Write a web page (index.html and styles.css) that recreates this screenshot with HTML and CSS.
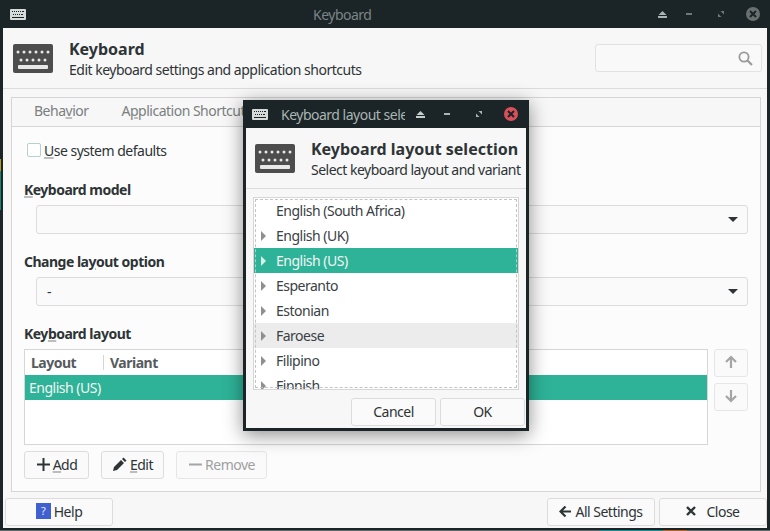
FILE: index.html
```html
<!DOCTYPE html>
<html lang="en">
<head>
  <meta charset="UTF-8">
  <title>Keyboard</title>
  <link rel="stylesheet" href="styles.css">
</head>
<body>
  <div class="window">
    <div class="titlebar">
      <svg class="tb-icon" width="16" height="11" viewBox="0 0 16 11"><use href="#kbd"/></svg>
      <span class="tb-title">Keyboard</span>
      <div class="tb-buttons">
        <svg class="tb-shade" width="9" height="7" viewBox="0 0 9 7"><path d="M4.5 0L8.5 4H.5zM0 5h9v2H0z" fill="#a9b5b3"/></svg>
        <svg class="tb-min" width="6" height="2" viewBox="0 0 6 2"><path d="M0 0h6v2H0z" fill="#6f7879"/></svg>
        <svg class="tb-max" width="6" height="6" viewBox="0 0 6 6"><path d="M2.5 0H6v3.5zM0 2.5L3.5 6H0z" fill="#6f7879"/></svg>
        <span class="tb-close"><svg width="8" height="8" viewBox="0 0 8 8"><path d="M1 1l6 6M7 1L1 7" stroke="#1b2426" stroke-width="2"/></svg></span>
      </div>
    </div>

    <div class="content">
      <div class="header">
        <svg class="head-icon" width="40" height="29" viewBox="0 0 40 29"><use href="#kbd-large"/></svg>
        <div class="head-text">
          <div class="head-title">Keyboard</div>
          <div class="head-sub">Edit keyboard settings and application shortcuts</div>
        </div>
        <div class="search">
          <svg width="15" height="15" viewBox="0 0 15 15"><circle cx="6" cy="6" r="4.6" fill="none" stroke="#9a9a9a" stroke-width="1.8"/><path d="M9.5 9.5L14 14" stroke="#9a9a9a" stroke-width="2.2"/></svg>
        </div>
      </div>

      <div class="notebook">
        <div class="tabs">
          <span class="tab">Beha<u>v</u>ior</span>
          <span class="tab">A<u>p</u>plication Shortcuts</span>
        </div>
        <div class="panel">
          <label class="check"><span class="check-box"></span><span><u>U</u>se system defaults</span></label>

          <div class="field-label"><u>K</u>eyboard model</div>
          <div class="combo"><span></span><i class="caret"></i></div>

          <div class="field-label">Change la<u>y</u>out option</div>
          <div class="combo"><span>-</span><i class="caret"></i></div>

          <div class="field-label">Key<u>b</u>oard layout</div>
          <div class="layout-row">
            <div class="list">
              <div class="list-head"><span class="col-layout">Layout</span><span class="col-variant">Variant</span></div>
              <div class="list-sel">English (US)</div>
            </div>
            <div class="move-btns">
              <button class="btn btn-off btn-move"><svg width="14" height="14" viewBox="0 0 14 14"><path d="M7 13V2M2 7l5-5 5 5" fill="none" stroke="#a5a5a5" stroke-width="2.2"/></svg></button>
              <button class="btn btn-off btn-move"><svg width="14" height="14" viewBox="0 0 14 14"><path d="M7 1v11M2 7l5 5 5-5" fill="none" stroke="#a5a5a5" stroke-width="2.2"/></svg></button>
            </div>
          </div>
          <div class="actions">
            <button class="btn btn-add"><svg width="15" height="15" viewBox="0 0 15 15"><path d="M7.5 1v13M1 7.5h13" stroke="#2e3436" stroke-width="2"/></svg><span><u>A</u>dd</span></button>
            <button class="btn btn-edit"><svg width="15" height="15" viewBox="0 0 15 15"><path d="M1 14l1-4 7-7 3 3-7 7zM10 2l1.500-1.500 3 3L13 5z" fill="#2e3436"/></svg><span><u>E</u>dit</span></button>
            <button class="btn btn-off btn-remove"><svg width="15" height="15" viewBox="0 0 15 15"><path d="M1 7.5h13" stroke="#a5a5a5" stroke-width="2"/></svg><span>Remove</span></button>
          </div>
        </div>
      </div>

      <div class="footer">
        <button class="btn btn-foot"><span class="help-icon">?</span><span>Help</span></button>
        <div class="foot-right">
          <button class="btn btn-foot"><svg width="13" height="13" viewBox="0 0 13 13"><path d="M12 6.5H2M6.5 1.500l-5 5 5 5" fill="none" stroke="#2e3436" stroke-width="2.2"/></svg><span>All Settings</span></button>
          <button class="btn btn-foot"><svg width="10" height="10" viewBox="0 0 10 10"><path d="M1 1l8 8M9 1l-8 8" stroke="#2e3436" stroke-width="2.4"/></svg><span class="close-label">Close</span></button>
        </div>
      </div>
    </div>
    <div class="desktop-strip"><span class="strip-teal"></span><span class="strip-orange"></span></div>
  </div>
  <div class="edge-yellow"></div>
  <div class="edge-teal"></div>

  <div class="dialog">
    <div class="titlebar dlg-bar">
      <svg class="dlg-tb-icon" width="16" height="11" viewBox="0 0 16 11"><use href="#kbd"/></svg>
      <span class="dlg-tb-title">Keyboard layout selection</span>
      <div class="tb-buttons dlg-buttons">
        <svg class="tb-shade" width="9" height="7" viewBox="0 0 9 7"><path d="M4.5 0L8.5 4H.5zM0 5h9v2H0z" fill="#c3d0ce"/></svg>
        <svg class="tb-min" width="6" height="2" viewBox="0 0 6 2"><path d="M0 0h6v2H0z" fill="#a9b5b3"/></svg>
        <svg class="tb-max" width="6" height="6" viewBox="0 0 6 6"><path d="M2.5 0H6v3.5zM0 2.5L3.5 6H0z" fill="#a9b5b3"/></svg>
        <span class="tb-close tb-close-on"><svg width="8" height="8" viewBox="0 0 8 8"><path d="M1 1l6 6M7 1L1 7" stroke="#1b2426" stroke-width="2"/></svg></span>
      </div>
    </div>
    <div class="dlg-body">
      <div class="dlg-header">
        <svg class="head-icon" width="40" height="29" viewBox="0 0 40 29"><use href="#kbd-large"/></svg>
        <div class="dlg-text">
          <div class="head-title">Keyboard layout selection</div>
          <div class="head-sub">Select keyboard layout and variant</div>
        </div>
      </div>
      <div class="tree">
        <div class="tree-focus"></div>
        <div class="tree-row"><span class="arrow arrow-none"></span>English (South Africa)</div>
        <div class="tree-row"><span class="arrow"></span>English (UK)</div>
        <div class="tree-row tree-sel"><span class="arrow"></span>English (US)</div>
        <div class="tree-row"><span class="arrow"></span>Esperanto</div>
        <div class="tree-row"><span class="arrow"></span>Estonian</div>
        <div class="tree-row tree-hover"><span class="arrow"></span>Faroese</div>
        <div class="tree-row"><span class="arrow"></span>Filipino</div>
        <div class="tree-row"><span class="arrow"></span>Finnish</div>
      </div>
      <div class="dlg-actions">
        <button class="btn btn-dlg">Cancel</button>
        <button class="btn btn-dlg">OK</button>
      </div>
    </div>
  </div>

  <svg class="defs" width="0" height="0">
    <defs>
      <g id="kbd" fill="#d6dad9">
        <path fill-rule="evenodd" d="M1 0h14a1 1 0 0 1 1 1v9a1 1 0 0 1-1 1H1a1 1 0 0 1-1-1V1a1 1 0 0 1 1-1zM2 2v1h1V2zm2 0v1h1V2zm2 0v1h1V2zm2 0v1h1V2zm2 0v1h1V2zm2 0v1h2V2zM3 5v1h1V5zm2 0v1h1V5zm2 0v1h1V5zm2 0v1h1V5zm2 0v1h2V5zM2 8v1h12V8z"/>
      </g>
      <g id="kbd-large">
        <rect width="40" height="29" rx="2" fill="#4d4d4d"/>
        <g fill="#e8e8e8">
          <circle cx="5" cy="8" r="1.500"/><circle cx="11" cy="8" r="1.500"/><circle cx="17" cy="8" r="1.500"/><circle cx="23" cy="8" r="1.500"/><circle cx="29" cy="8" r="1.500"/><circle cx="35" cy="8" r="1.500"/>
          <circle cx="8" cy="16" r="1.500"/><circle cx="14" cy="16" r="1.500"/><circle cx="20" cy="16" r="1.500"/><circle cx="26" cy="16" r="1.500"/><circle cx="32" cy="16" r="1.500"/>
          <rect x="5" y="21" width="30" height="4" rx="1"/>
        </g>
      </g>
    </defs>
  </svg>
</body>
</html>
```

FILE: styles.css
```css
html, body {
  margin: 0;
  padding: 0;
}
body {
  width: 770px;
  height: 531px;
  overflow: hidden;
  position: relative;
  font-family: "Noto Sans", sans-serif;
  font-size: 14px;
  letter-spacing: -0.5px;
  color: #2e3436;
  background: #1b2426;
}
u {
  text-decoration-color: #bdbdbd;
  text-decoration-thickness: 2px;
  text-underline-offset: 1px;
}
.defs {
  position: absolute;
}
.window {
  width: 770px;
  height: 531px;
  box-sizing: border-box;
  padding: 0 3px;
  display: flex;
  flex-direction: column;
}
.titlebar {
  height: 28px;
  flex: none;
  display: flex;
  align-items: center;
  position: relative;
  color: #7b8486;
}
.tb-icon {
  margin-left: 7px;
  margin-top: 1px;
}
.tb-title {
  position: absolute;
  left: 310px;
  top: 5px;
}
.tb-buttons {
  margin-left: auto;
  margin-right: 7px;
  display: flex;
  align-items: center;
}
.tb-min {
  margin-left: 19px;
}
.tb-max {
  margin-left: 26px;
}
.tb-close {
  margin-left: 22px;
  width: 14px;
  height: 14px;
  border-radius: 50%;
  background: #6a7070;
  display: flex;
  align-items: center;
  justify-content: center;
}
.tb-close-on {
  background: #d9505a;
}
.content {
  flex: none;
  height: 500px;
  background: #f7f7f7;
  display: flex;
  flex-direction: column;
}
.desktop-strip {
  margin: 2px -3px 0;
  height: 1px;
  background: #5b6769;
  position: relative;
  display: flex;
  padding-left: 600px;
}
.strip-teal {
  width: 63px;
  background: #0f8c93;
}
.strip-orange {
  width: 24px;
  background: #c2611c;
}
.edge-yellow {
  position: absolute;
  left: 0;
  top: 159px;
  width: 1px;
  height: 12px;
  background: #b59a1d;
}
.edge-teal {
  position: absolute;
  left: 0;
  top: 171px;
  width: 1px;
  height: 39px;
  background: #12876e;
}
.header {
  height: 61px;
  flex: none;
  box-sizing: border-box;
  border-bottom: 1px solid #dcdcdc;
  display: flex;
  align-items: flex-start;
  padding: 11px 5px 0 10px;
}
.head-icon {
  flex: none;
  margin-top: 5px;
}
.head-text {
  margin-left: 16px;
}
.head-title {
  font-size: 16px;
  font-weight: 700;
  letter-spacing: 0;
  line-height: 20px;
}
.head-sub {
  line-height: 21px;
}
.search {
  margin-left: auto;
  margin-top: 5px;
  width: 167px;
  height: 28px;
  box-sizing: border-box;
  border: 1px solid #e2e2e2;
  border-radius: 3px;
  background: #f9f9f9;
  display: flex;
  align-items: center;
  justify-content: flex-end;
  padding-right: 8px;
}
.notebook {
  margin: 8px 6px 0 8px;
  height: 395px;
  flex: none;
  box-sizing: border-box;
  border: 1px solid #d6d6d6;
  display: flex;
  flex-direction: column;
}
.tabs {
  height: 29px;
  flex: none;
  box-sizing: border-box;
  border-bottom: 1px solid #d6d6d6;
  display: flex;
  align-items: center;
  padding: 0 0 4px 22px;
  gap: 33px;
  color: #7a7f80;
  white-space: nowrap;
}
.panel {
  flex: 1;
  background: #fcfcfc;
  padding: 13px 12px 0;
}
.check {
  display: flex;
  align-items: center;
  height: 20px;
  margin-left: 3px;
  gap: 3px;
}
.check-box {
  width: 12px;
  height: 12px;
  border: 1px solid #b6d0cf;
  border-radius: 2px;
  background: #fff;
}
.field-label {
  font-weight: 700;
  line-height: 20px;
  margin-top: 20px;
}
.field-label + .combo {
  margin-top: 5px;
}
.combo + .field-label {
  margin-top: 18px;
}
.combo {
  margin-left: 12px;
  height: 29px;
  box-sizing: border-box;
  border: 1px solid #dcdcdc;
  border-radius: 3px;
  background: #fafafa;
  display: flex;
  align-items: center;
  justify-content: space-between;
  padding: 0 9px 0 10px;
}
.caret {
  width: 0;
  height: 0;
  border-left: 5px solid transparent;
  border-right: 5px solid transparent;
  border-top: 5px solid #2e3436;
}
.layout-row {
  display: flex;
  gap: 6px;
  margin-top: 5px;
}
.list {
  width: 684px;
  height: 96px;
  box-sizing: border-box;
  border: 1px solid #d6d6d6;
  background: #fff;
}
.list-head {
  height: 25px;
  display: flex;
  align-items: center;
  font-weight: 700;
  color: #555b5e;
}
.col-layout {
  width: 79px;
  box-sizing: border-box;
  padding-left: 6px;
  border-right: 1px solid #d6d6d6;
  line-height: 15px;
  margin-right: 6px;
}
.list-sel {
  height: 25px;
  line-height: 25px;
  background: #2eb398;
  color: #f4f4f4;
  padding-left: 4px;
}
.move-btns {
  display: flex;
  flex-direction: column;
  gap: 6px;
}
.btn {
  font: inherit;
  letter-spacing: inherit;
  color: inherit;
  height: 28px;
  box-sizing: border-box;
  border: 1px solid #dcdcdc;
  border-radius: 3px;
  background: #fafafa;
  padding: 0 0 2px;
  display: flex;
  align-items: center;
  justify-content: center;
}
.btn-off {
  color: #a0a0a0;
  border-color: #e6e6e6;
}
.btn-move {
  width: 34px;
}
.actions {
  display: flex;
  margin-top: 6px;
  gap: 12px;
}
.btn-add {
  width: 65px;
  gap: 2px;
}
.btn-edit {
  width: 63px;
  gap: 3px;
}
.btn-remove {
  width: 91px;
  gap: 2px;
}
.footer {
  display: flex;
  justify-content: space-between;
  margin: 6px 0 0 2px;
}
.foot-right {
  display: flex;
  gap: 4px;
}
.btn-foot {
  width: 108px;
  gap: 3px;
}
.help-icon {
  width: 15px;
  height: 16px;
  background: #4060d0;
  color: #e8ecf8;
  font-size: 11px;
  line-height: 16px;
  text-align: center;
}
.close-label {
  margin-left: 7px;
}

/* dialog floats over the main window */
.dialog {
  position: absolute;
  left: 243px;
  top: 100px;
  width: 286px;
  height: 331px;
  box-sizing: border-box;
  padding: 0 3px 3px;
  background: #1b2426;
  display: flex;
  flex-direction: column;
  box-shadow: 0 4px 18px rgba(0, 0, 0, 0.45);
}
.dlg-bar {
  color: #a9b5b3;
}
.dlg-tb-icon {
  margin-left: 6px;
}
.dlg-tb-title {
  width: 124px;
  margin-left: 13px;
  overflow: hidden;
  white-space: nowrap;
}
.dlg-buttons {
  margin-right: 8px;
}
.dlg-body {
  flex: 1;
  background: #f7f7f7;
  display: flex;
  flex-direction: column;
}
.dlg-header {
  height: 61px;
  flex: none;
  box-sizing: border-box;
  border-bottom: 1px solid #dcdcdc;
  display: flex;
  padding: 11px 0 0 9px;
}
.dlg-text {
  margin-left: 16px;
  white-space: nowrap;
}
.tree {
  position: relative;
  margin: 8px 7px 0;
  height: 193px;
  box-sizing: border-box;
  border: 1px solid #d6d6d6;
  background: #fff;
  overflow: hidden;
}
.tree-focus {
  position: absolute;
  inset: 1px;
  border: 1px dashed #c4c4c4;
  z-index: 1;
}
.tree-row {
  height: 25px;
  line-height: 25px;
  display: flex;
  align-items: center;
  color: #3a4144;
}
.tree-sel {
  background: #2eb398;
  color: #f4f4f4;
}
.tree-hover {
  background: #ececec;
}
.arrow {
  width: 0;
  height: 0;
  border-top: 5px solid transparent;
  border-bottom: 5px solid transparent;
  border-left: 5px solid #8f9191;
  margin: 0 10px 0 7px;
}
.tree-sel .arrow {
  border-left-color: #d8f0ea;
}
.arrow-none {
  border-left-color: transparent;
}
.dlg-actions {
  display: flex;
  justify-content: flex-end;
  gap: 4px;
  margin: 8px 1px 0 0;
}
.btn-dlg {
  width: 85px;
}
```
